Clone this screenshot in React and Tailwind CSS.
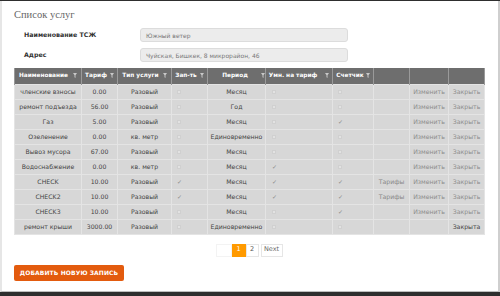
import React from "react";

const rows = [
  { n: "членские взносы", t: "0.00", type: "Разовый", z: 0, p: "Месяц", u: 0, s: 0 },
  { n: "ремонт подъезда", t: "56.00", type: "Разовый", z: 0, p: "Год", u: 0, s: 0 },
  { n: "Газ", t: "5.00", type: "Разовый", z: 0, p: "Месяц", u: 0, s: 1 },
  { n: "Озеленение", t: "0.00", type: "кв. метр", z: 0, p: "Единовременно", u: 0, s: 0 },
  { n: "Вывоз мусора", t: "67.00", type: "Разовый", z: 0, p: "Месяц", u: 0, s: 0 },
  { n: "Водоснабжение", t: "0.00", type: "кв. метр", z: 0, p: "Месяц", u: 1, s: 0 },
  { n: "CHECK", t: "10.00", type: "Разовый", z: 1, p: "Месяц", u: 1, s: 1, tar: 1 },
  { n: "CHECK2", t: "10.00", type: "Разовый", z: 1, p: "Месяц", u: 1, s: 1, tar: 1 },
  { n: "CHECK3", t: "10.00", type: "Разовый", z: 0, p: "Месяц", u: 0, s: 1 },
  { n: "ремонт крыши", t: "3000.00", type: "Разовый", z: 0, p: "Единовременно", u: 0, s: 0, closed: 1 },
];

const Funnel = () => (
  <svg width="4" height="5" viewBox="0 0 4 5" className="shrink-0">
    <path d="M0 0H4L2.5 2.2V5L1.5 4.3V2.2Z" fill="#c8c8c8" />
  </svg>
);

const Check = ({ on }) =>
  on ? (
    <span className="text-[6px] leading-none text-[#8a8a8a]">✓</span>
  ) : (
    <span className="inline-block w-[4px] h-[4px] bg-[#e2e2e2] border border-[#d0d0d0]" />
  );

const headers = [
  { label: "Наименование", w: 67, f: true, gap: "gap-[5px]" },
  { label: "Тариф", w: 36, f: true, gap: "gap-[3px]" },
  { label: "Тип услуги", w: 54, f: true, gap: "gap-[4px]" },
  { label: "Зап-ть", w: 36, f: true, gap: "gap-[3px]" },
  { label: "Период", w: 58, f: true, gap: "gap-[13px]", pl: "pl-[14px]" },
  { label: "Умн. на тариф", w: 67, f: true, gap: "gap-[8px]" },
  { label: "Счетчик", w: 41, f: true, gap: "gap-[2px]" },
  { label: "", w: 36 },
  { label: "", w: 39 },
  { label: "", w: 36 },
];

export default function App() {
  return (
    <div className="w-[500px] h-[296px] bg-[#2e2e2e] pt-[1px] font-['DejaVu_Sans',sans-serif]">
      <div className="h-[291px] bg-white border-l-2 border-l-[#e6e6e6] border-r-2 border-r-[#cfcfcf] border-b border-b-[#bdbdbd] pl-[12px]">
        <div className="pt-[8px] h-[27px] font-['Liberation_Serif',serif] text-[10.5px] leading-[12px] text-[#666]">
          Список услуг
        </div>
        <div className="flex items-center h-[14px]">
          <div className="w-[126px] pl-[10px] text-[6.3px] font-bold text-[#333]">Наименование ТСЖ</div>
          <div className="w-[208px] h-[14px] bg-[#ececec] border border-[#dcdcdc] rounded-[3px] flex items-center pl-[5px] text-[6px] text-[#777]">
            Южный ветер
          </div>
        </div>
        <div className="flex items-center h-[14px] mt-[6px]">
          <div className="w-[126px] pl-[10px] text-[6.3px] font-bold text-[#333]">Адрес</div>
          <div className="w-[208px] h-[14px] bg-[#ececec] border border-[#dcdcdc] rounded-[3px] flex items-center pl-[5px] text-[6px] text-[#777]">
            Чуйская, Бишкек, 8 микрорайон, 46
          </div>
        </div>
        <table className="mt-[6px] w-[470px] table-fixed border-collapse text-[6.2px]">
          <colgroup>
            {headers.map((h, i) => (
              <col key={i} style={{ width: h.w }} />
            ))}
          </colgroup>
          <thead>
            <tr className="h-[16px] bg-[#6e6e6e]">
              {headers.map((h, i) => (
                <th key={i} className="border-x border-[#9a9a9a] p-0 font-bold text-white text-[5.8px]">
                  {h.label ? (
                    <div className={`flex items-center justify-center ${h.gap} ${h.pl || ""}`}>
                      <span className="whitespace-nowrap">{h.label}</span>
                      <Funnel />
                    </div>
                  ) : null}
                </th>
              ))}
            </tr>
          </thead>
          <tbody>
            {rows.map((r, i) => (
              <tr key={i} className="h-[15px] bg-[#d7d7d7] text-[#444]">
                <td className="border border-[#e4e4e4] p-0 text-center whitespace-nowrap">{r.n}</td>
                <td className="border border-[#e4e4e4] p-0 text-center">{r.t}</td>
                <td className="border border-[#e4e4e4] p-0 text-center">{r.type}</td>
                <td className="border border-[#e4e4e4] p-0 pl-[5px] text-left">
                  <div className="flex items-center h-[14px]"><Check on={r.z} /></div>
                </td>
                <td className="border border-[#e4e4e4] p-0 text-center whitespace-nowrap">{r.p}</td>
                <td className="border border-[#e4e4e4] p-0 pl-[6px]">
                  <div className="flex items-center h-[14px]"><Check on={r.u} /></div>
                </td>
                <td className="border border-[#e4e4e4] p-0 pl-[5px]">
                  <div className="flex items-center h-[14px]"><Check on={r.s} /></div>
                </td>
                <td className="border border-[#e4e4e4] p-0 text-center text-[#888]">{r.tar ? "Тарифы" : ""}</td>
                <td className="border border-[#e4e4e4] p-0 text-center text-[#8c8c8c]">{r.closed ? "" : "Изменить"}</td>
                <td className={`border border-[#e4e4e4] p-0 text-center ${r.closed ? "text-[#444]" : "text-[#8c8c8c]"}`}>
                  {r.closed ? "Закрыта" : "Закрыть"}
                </td>
              </tr>
            ))}
          </tbody>
        </table>
        <div className="w-[470px] flex justify-center mt-[9px] h-[13px] text-[6.5px]">
          <div className="flex">
            <div className="w-[16px] h-[13px] border border-[#f3f3f3] bg-white" />
            <div className="w-[14px] h-[13px] bg-[#ff9a00] text-white flex items-center justify-center">1</div>
            <div className="w-[13px] h-[13px] border border-[#e6e6e6] bg-white text-[#555] flex items-center justify-center">2</div>
            <div className="w-[22px] h-[13px] ml-[2px] border border-[#e6e6e6] bg-white text-[#666] flex items-center justify-center">Next</div>
          </div>
        </div>
        <div className="mt-[8px] w-[110px] h-[16px] bg-[#e35b0e] rounded-[2px] flex items-center justify-center text-white font-bold text-[6px] tracking-[0.1px]">
          ДОБАВИТЬ НОВУЮ ЗАПИСЬ
        </div>
      </div>
    </div>
  );
}
